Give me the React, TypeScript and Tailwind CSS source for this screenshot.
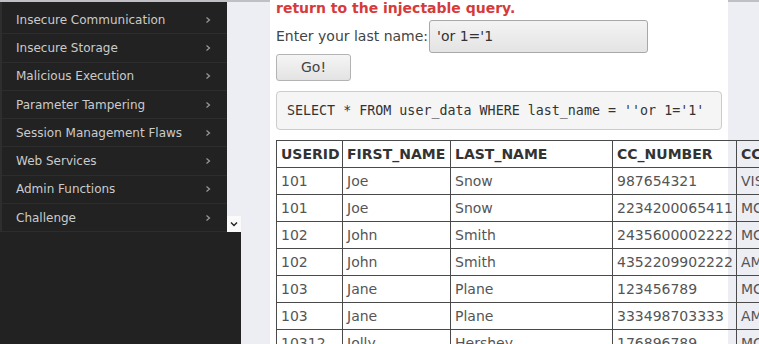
const menu = [
  'Insecure Communication',
  'Insecure Storage',
  'Malicious Execution',
  'Parameter Tampering',
  'Session Management Flaws',
  'Web Services',
  'Admin Functions',
  'Challenge',
];

const rows = [
  ['101', 'Joe', 'Snow', '987654321', 'VISA'],
  ['101', 'Joe', 'Snow', '2234200065411', 'MC'],
  ['102', 'John', 'Smith', '2435600002222', 'MC'],
  ['102', 'John', 'Smith', '4352209902222', 'AMEX'],
  ['103', 'Jane', 'Plane', '123456789', 'MC'],
  ['103', 'Jane', 'Plane', '333498703333', 'AMEX'],
  ['10312', 'Jolly', 'Hershey', '176896789', 'MC'],
];

const cols = [
  { name: 'USERID', w: 'w-[66px]' },
  { name: 'FIRST_NAME', w: 'w-[108px]' },
  { name: 'LAST_NAME', w: 'w-[162px]' },
  { name: 'CC_NUMBER', w: 'w-[124px]' },
  { name: 'CC_TYPE', w: 'w-[90px]' },
];

function Chevron({ className }: { className?: string }) {
  return (
    <svg width="6" height="8" viewBox="0 0 6 8" className={className}>
      <path d="M1.5 1.5 L4.5 4 L1.5 6.5" fill="none" stroke="currentColor" strokeWidth="1.2" />
    </svg>
  );
}

function Sidebar() {
  return (
    <div className="w-[241px] shrink-0 flex flex-col bg-[#222222]">
      <div className="flex">
        <ul className="w-[227px] pt-[4px] border-l-2 border-[#2e2e2e]">
          {menu.map((m) => (
            <li
              key={m}
              className="h-[28.3px] flex items-center justify-between pl-[14px] pr-[16px] border-b border-[#2d2d2d] text-[12px] text-[#cbcbcb]"
            >
              <span>{m}</span>
              <Chevron className="text-[#9a9a9a]" />
            </li>
          ))}
        </ul>
        <div className="w-[14px] bg-[#ededf4] flex flex-col justify-end">
          <div className="h-[16px] bg-[#fafafa] flex items-center justify-center">
            <svg width="8" height="6" viewBox="0 0 8 6">
              <path d="M1 1.5 L4 4.5 L7 1.5" fill="none" stroke="#222" strokeWidth="1.4" />
            </svg>
          </div>
        </div>
      </div>
      <div className="flex-1" />
    </div>
  );
}

export default function App() {
  return (
    <div
      className="w-[759px] h-[344px] overflow-hidden flex flex-col bg-[#ededf4]"
      style={{ fontFamily: '"DejaVu Sans", sans-serif' }}
    >
      <div className="h-[2px] bg-[#bfbfc4] shrink-0" />
      <div className="flex flex-1 min-h-0">
        <Sidebar />
        <div className="pl-[29px] flex-1 min-w-0">
          <div className="w-[458px] h-[400px] bg-white px-[6px]">
            <div className="-mt-[2px] text-[14px] leading-[17px] font-bold text-[#d63b3b]">
              return to the injectable query.
            </div>
            <div className="flex items-center mt-[3px] text-[14px] text-[#444]">
              <span>Enter your last name:</span>
              <div className="ml-[1px] w-[219px] h-[33px] flex items-center pl-[7px] border border-[#a8a8a8] rounded-[3px] bg-gradient-to-b from-[#f3f3f3] to-[#e4e4e4] text-[#333]">
                'or 1='1
              </div>
            </div>
            <div className="mt-[1px] w-[75px] h-[27px] flex items-center justify-center border border-[#b3b3b3] rounded-[3px] bg-gradient-to-b from-[#f5f5f5] to-[#e3e3e3] text-[14px] text-[#444]">
              Go!
            </div>
            <div
              className="mt-[10px] w-[446px] h-[39px] flex items-center pl-[10px] bg-[#f5f5f5] border border-[#cccccc] rounded-[4px] text-[13.33px] text-[#333]"
              style={{ fontFamily: '"DejaVu Sans Mono", monospace' }}
            >
              SELECT * FROM user_data WHERE last_name = ''or 1='1'
            </div>
            <table className="mt-[10px] table-fixed w-[550px] border-collapse text-[14px] text-[#555]">
              <thead>
                <tr>
                  {cols.map((c) => (
                    <th
                      key={c.name}
                      className={`${c.w} h-[27px] border border-[#4a4a4a] px-[4px] text-left font-bold text-[#333]`}
                    >
                      {c.name}
                    </th>
                  ))}
                </tr>
              </thead>
              <tbody>
                {rows.map((r, i) => (
                  <tr key={i}>
                    {r.map((v, j) => (
                      <td key={j} className="h-[27px] border border-[#4a4a4a] px-[4px]">
                        {v}
                      </td>
                    ))}
                  </tr>
                ))}
              </tbody>
            </table>
          </div>
        </div>
      </div>
    </div>
  );
}
